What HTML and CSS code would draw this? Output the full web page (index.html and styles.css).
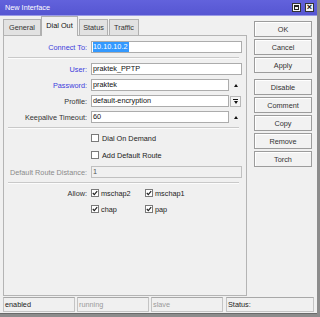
FILE: index.html
```html
<!DOCTYPE html>
<html>
<head>
<meta charset="utf-8">
<link rel="stylesheet" href="styles.css">
</head>
<body>
<div class="window">
  <div class="titlebar">
    <span class="title">New Interface</span>
    <div class="tbtns">
      <span class="tb"><span class="maxbox"></span></span>
      <span class="tb close">×</span>
    </div>
  </div>
  <div class="main">
    <div class="left">
      <div class="tabs">
        <div class="tab t-general">General</div>
        <div class="tab active t-dial">Dial Out</div>
        <div class="tab t-status">Status</div>
        <div class="tab t-traffic">Traffic</div>
      </div>
      <div class="panel">
        <div class="row r-first">
          <div class="label blue">Connect To:</div>
          <div class="field"><div class="input"><span class="sel">10.10.10.2</span></div></div>
        </div>
        <div class="sep"></div>
        <div class="row r-top">
          <div class="label blue">User:</div>
          <div class="field"><div class="input">praktek_PPTP</div></div>
        </div>
        <div class="row">
          <div class="label blue">Password:</div>
          <div class="field"><div class="input short">praktek</div><div class="icon"><span class="up"></span></div></div>
        </div>
        <div class="row">
          <div class="label">Profile:</div>
          <div class="field"><div class="input short">default-encryption</div><div class="icon dd"><span class="bar"></span><span class="down"></span></div></div>
        </div>
        <div class="row">
          <div class="label">Keepalive Timeout:</div>
          <div class="field"><div class="input short">60</div><div class="icon"><span class="up"></span></div></div>
        </div>
        <div class="sep s2"></div>
        <div class="row r-top">
          <div class="label"></div>
          <div class="field"><span class="cb"></span><span class="cbtext">Dial On Demand</span></div>
        </div>
        <div class="row r-cb">
          <div class="label"></div>
          <div class="field"><span class="cb"></span><span class="cbtext">Add Default Route</span></div>
        </div>
        <div class="row r-cb">
          <div class="label grey">Default Route Distance:</div>
          <div class="field"><div class="input disabled">1</div></div>
        </div>
        <div class="sep s2"></div>
        <div class="row r-top">
          <div class="label">Allow:</div>
          <div class="field grid">
            <div class="opt"><span class="cb on"><svg viewBox="0 0 6 6" width="6" height="6"><polyline points="0.8,3 2.3,4.6 5.2,1.2" fill="none" stroke="#222" stroke-width="1.2"/></svg></span><span class="cbtext2">mschap2</span></div>
            <div class="opt"><span class="cb on"><svg viewBox="0 0 6 6" width="6" height="6"><polyline points="0.8,3 2.3,4.6 5.2,1.2" fill="none" stroke="#222" stroke-width="1.2"/></svg></span><span class="cbtext2">mschap1</span></div>
          </div>
        </div>
        <div class="row">
          <div class="label"></div>
          <div class="field grid">
            <div class="opt"><span class="cb on"><svg viewBox="0 0 6 6" width="6" height="6"><polyline points="0.8,3 2.3,4.6 5.2,1.2" fill="none" stroke="#222" stroke-width="1.2"/></svg></span><span class="cbtext2">chap</span></div>
            <div class="opt"><span class="cb on"><svg viewBox="0 0 6 6" width="6" height="6"><polyline points="0.8,3 2.3,4.6 5.2,1.2" fill="none" stroke="#222" stroke-width="1.2"/></svg></span><span class="cbtext2">pap</span></div>
          </div>
        </div>
      </div>
    </div>
    <div class="buttons">
      <div class="btn">OK</div>
      <div class="btn">Cancel</div>
      <div class="btn">Apply</div>
      <div class="btn gap">Disable</div>
      <div class="btn">Comment</div>
      <div class="btn">Copy</div>
      <div class="btn">Remove</div>
      <div class="btn">Torch</div>
    </div>
  </div>
  <div class="statusbar">
    <div class="cell">enabled</div>
    <div class="cell dim">running</div>
    <div class="cell dim">slave</div>
    <div class="cell last">Status:</div>
  </div>
</div>
</body>
</html>
```
FILE: styles.css
```css
* { box-sizing: border-box; }
html, body { margin: 0; padding: 0; }
body {
  width: 320px;
  height: 317px;
  background: #8c8c8c;
  font-family: "Liberation Sans", Arial, sans-serif;
  font-size: 7.3px;
  color: #222;
  overflow: hidden;
}
.window {
  width: 317px;
  height: 314px;
  background: #f0f0f0;
  display: flex;
  flex-direction: column;
  border-bottom: 1px solid #6a6a6a;
}
.titlebar {
  height: 16px;
  background: linear-gradient(#6262dc, #5656d2);
  border-bottom: 1px solid #9a9ae6;
  display: flex;
  align-items: center;
  justify-content: space-between;
  padding: 0 3px 0 5px;
  color: #fff;
}
.title { font-size: 7.3px; letter-spacing: 0; }
.tbtns { display: flex; gap: 4px; }
.tb {
  width: 9px;
  height: 9px;
  background: #f4f4f4;
  border: 1px solid #333;
  display: flex;
  align-items: center;
  justify-content: center;
  color: #111;
  font-size: 9px;
  line-height: 7px;
  font-weight: bold;
}
.maxbox { width: 5px; height: 5px; border: 1px solid #222; border-top-width: 2px; }
.main {
  display: flex;
  padding-top: 3px;
  padding-left: 3px;
  height: 280px;
}
.left { width: 244px; display: flex; flex-direction: column; }
.tabs { display: flex; height: 16px; align-items: flex-end; position: relative; z-index: 1; }
.tab {
  height: 16px;
  border: 1px solid #b0b0b0;
  border-bottom: none;
  background: #e2e2e2;
  color: #333;
  display: flex;
  align-items: center;
  justify-content: center;
  margin-right: 1px;
}
.t-general { width: 38px; }
.t-dial { width: 37px; }
.t-status { width: 29px; }
.t-traffic { width: 30px; }
.tab.active {
  height: 20px;
  margin-bottom: -1px;
  background: #f0f0f0;
  color: #111;
  margin-left: -1px;
  padding-bottom: 2px;
}
.panel {
  height: 261px;
  border: 1px solid #b4b4b4;
  background: #f0f0f0;
  padding: 5px 4px 0 0;
  display: flex;
  flex-direction: column;
}
.row { display: flex; height: 12px; margin-top: 4px; align-items: center; }
.row.r-first { margin-top: 0; }
.row.r-top { margin-top: 0; }
.row.r-cb { margin-top: 5px; }
.label {
  width: 83px;
  text-align: right;
  color: #333;
  white-space: nowrap;
}
.label.blue { color: #3c3cdc; }
.label.grey { color: #8a8a8a; }
.field {
  margin-left: 4px;
  width: 151px;
  height: 12px;
  display: flex;
  align-items: center;
}
.input {
  width: 151px;
  height: 12px;
  background: #fff;
  border: 1px solid #acacac;
  padding-left: 1px;
  line-height: 10px;
  color: #111;
  white-space: nowrap;
}
.input.short { width: 138px; }
.input.disabled { background: #f0f0f0; border-color: #c0c0c0; color: #555; }
.sel { background: #3399ff; color: #fff; display: inline-block; height: 10px; padding-right: 1px; }
.icon { width: 13px; height: 12px; display: flex; align-items: center; justify-content: center; }
.up {
  width: 0; height: 0;
  border-left: 2.5px solid transparent;
  border-right: 2.5px solid transparent;
  border-bottom: 3px solid #111;
}
.icon.dd {
  width: 11px;
  height: 11px;
  margin-left: 1px;
  border: 1px solid #b8b8b8;
  background: #f4f4f4;
  flex-direction: column;
  gap: 1px;
}
.bar { width: 5px; height: 1px; background: #111; }
.down {
  width: 0; height: 0;
  border-left: 2.5px solid transparent;
  border-right: 2.5px solid transparent;
  border-top: 3px solid #111;
}
.sep {
  height: 2px;
  margin: 4px 3px 4px 4px;
  border-top: 1px solid #c9c9c9;
  border-bottom: 1px solid #fcfcfc;
}
.sep.s2 { margin-bottom: 3px; }
.cb {
  width: 8px;
  height: 8px;
  border: 1px solid #7a7a7a;
  background: #fff;
  display: inline-flex;
  align-items: center;
  justify-content: center;
  flex: none;
}
.cbtext { margin-left: 3px; color: #222; }
.cbtext2 { margin-left: 2px; color: #222; }
.grid { display: grid; grid-template-columns: 54px 54px; }
.opt { display: flex; align-items: center; }
.buttons {
  margin-left: 7px;
  padding-top: 2px;
  display: flex;
  flex-direction: column;
  gap: 2px;
}
.btn {
  width: 58px;
  height: 16px;
  border: 1px solid #9c9c9c;
  background: #f2f2f2;
  box-shadow: inset 1px 1px 0 #fff;
  color: #333;
  display: flex;
  align-items: center;
  justify-content: center;
}
.btn.gap { margin-top: 4px; }
.statusbar {
  display: flex;
  margin-top: 1px;
  padding-left: 3px;
  height: 15px;
  gap: 2px;
}
.cell {
  width: 72px;
  height: 15px;
  border: 1px solid #c4c4c4;
  border-top-color: #a8a8a8;
  background: #f0f0f0;
  padding-left: 1px;
  line-height: 13px;
  color: #222;
}
.cell.dim { color: #9a9a9a; }
.cell.last { width: 88px; margin-left: 1px; }
```
